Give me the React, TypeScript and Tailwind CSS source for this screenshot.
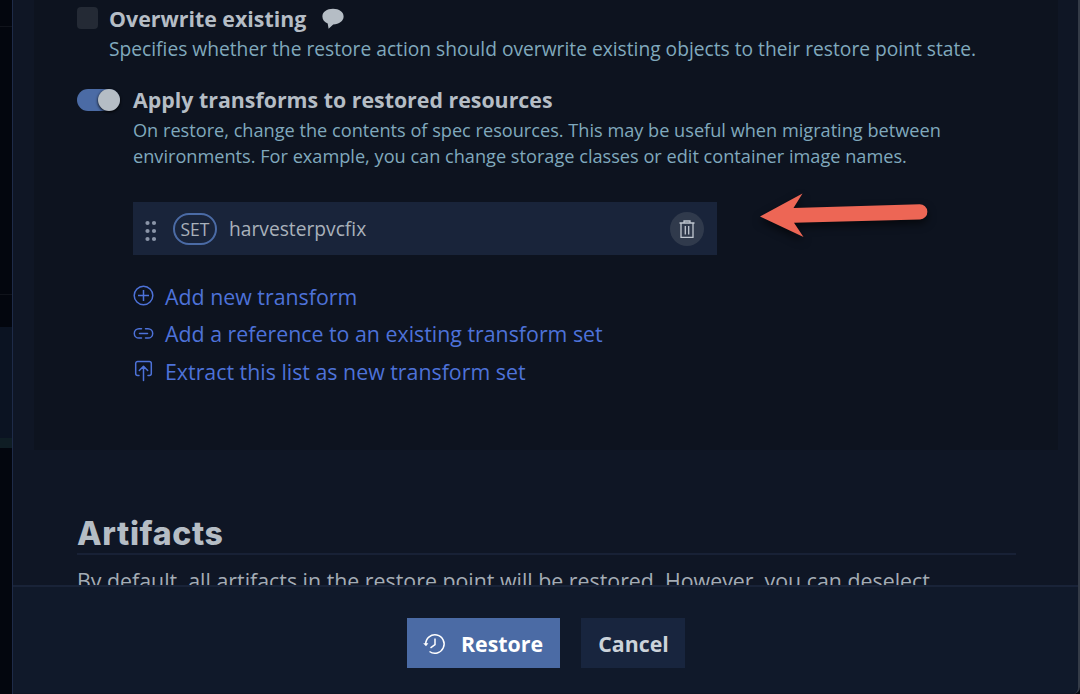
import type { ReactNode } from "react";

function ChatIcon() {
  return (
    <svg width="22" height="22" viewBox="0 0 22 22" className="ml-[16px] mt-[8px] shrink-0" fill="#b5bdc5">
      <path d="M11 .8C4.800 .8 .4 4 .4 8.500c0 3.200 2 5.700 5.300 7L6.600 20.700l4.600-4.300c6-.1 10.400-3.400 10.400-7.900C21.600 4 17.200 .8 11 .8Z" />
    </svg>
  );
}

function GripIcon() {
  return (
    <svg width="14" height="22" viewBox="0 0 14 22" fill="#8b95a8" className="mt-[4px]">
      {[3, 11, 19].map((y) => (
        <g key={y}>
          <circle cx="3.500" cy={y} r="2.100" />
          <circle cx="10" cy={y} r="2.100" />
        </g>
      ))}
    </svg>
  );
}

function TrashIcon() {
  return (
    <svg width="18" height="20" viewBox="0 0 18 20" fill="none" stroke="#c0c7d0" strokeWidth="1.300">
      <path d="M1.500 4h15M6 4V2h6v2M3 4v14.300h12V4M7.300 7v8.500M10.700 7v8.500" />
    </svg>
  );
}

function PlusIcon() {
  return (
    <svg width="22" height="22" viewBox="0 0 22 22" fill="none" stroke="currentColor" strokeWidth="1.500">
      <circle cx="10.500" cy="10.500" r="9.300" />
      <path d="M10.500 5v11M5 10.500h11" />
    </svg>
  );
}

function LinkIcon() {
  return (
    <svg width="22" height="22" viewBox="0 0 22 22" fill="none" stroke="currentColor" strokeWidth="1.500" strokeLinecap="round">
      <path d="M8.500 5.700H6a4.700 4.700 0 0 0 0 9.400h2.500M12.500 5.700H15a4.700 4.700 0 0 1 0 9.400h-2.500M6.500 10.400h8" />
    </svg>
  );
}

function ExtractIcon() {
  return (
    <svg width="22" height="22" viewBox="0 0 22 22" fill="none" stroke="currentColor" strokeWidth="1.500" strokeLinecap="round" strokeLinejoin="round">
      <path d="M6 15.500H4.700a2 2 0 0 1-2-2V3.500a2 2 0 0 1 2-2h11.600a2 2 0 0 1 2 2v10a2 2 0 0 1-2 2H15M10.500 20.500V6.500M6.300 10.500 10.500 6.300 14.700 10.500" />
    </svg>
  );
}

function HistoryIcon() {
  return (
    <svg width="24" height="24" viewBox="0 0 24 24" fill="none" stroke="#ffffff" strokeWidth="1.500" className="mt-px">
      <path d="M3.700 12A9.200 9.200 0 1 1 7.500 19.500" />
      <path d="M13 6.500v6l-4.500 3.300" />
      <path d="M1.200 11.300h5.200L4 14.200Z" fill="#ffffff" stroke="none" />
    </svg>
  );
}

function TransformLink({ icon, children }: { icon: ReactNode; children: ReactNode }) {
  return (
    <a className="flex h-[37.500px] items-center gap-[10px] whitespace-nowrap text-[21.350px] text-[#4d72d9]">
      {icon}
      <span className="pt-px">{children}</span>
    </a>
  );
}

function Arrow() {
  return (
    <svg width="190" height="60" viewBox="750 185 190 60" className="absolute left-[750px] top-[185px] overflow-visible drop-shadow-[0_4px_4px_rgba(0,0,0,0.6)]" fill="#ed6655">
      <path d="M760 216.500 802.500 193.500 793.500 208 919.500 204.300a7.600 7.600 0 0 1 .5 15.200L794 222.800 803.500 237Z" />
    </svg>
  );
}

export default function App() {
  return (
    <div className="relative flex h-[694px] w-[1080px] overflow-hidden bg-[#03060e] font-['Open_Sans','Noto_Sans',sans-serif]">
      <aside className="flex w-[12px] shrink-0 flex-col">
        <div className="h-[27px] border-b border-[#10131b]" />
        <div className="h-[268px] border-b border-[#10131b]" />
        <div className="h-[32px]" />
        <div className="h-[111px] bg-[#0b1322]" />
        <div className="h-[10px] bg-[#0f1d24]" />
      </aside>

      <div className="flex min-w-0 flex-1 flex-col rounded-br-[7px] border-r-2 border-l border-r-[#343b47] border-l-[#1e2b48] bg-[#0f1625]">
        <main className="flex h-[585px] shrink-0 flex-col overflow-hidden pr-[20px] pl-[21px]">
          <section className="h-[450px] shrink-0 bg-[#0d131f] pl-[43px]">
            <div className="flex h-[33px]">
              <span className="mt-[7px] h-[22px] w-[21px] shrink-0 rounded-[4px] bg-[#242a35]" />
              <h3 className="ml-[11px] text-[21.350px] leading-[38px] font-bold whitespace-nowrap text-[#b5bdc5]">Overwrite existing</h3>
              <ChatIcon />
            </div>
            <p className="ml-[32px] text-[19.220px] leading-[32px] whitespace-nowrap text-[#80a9bd]">
              Specifies whether the restore action should overwrite existing objects to their restore point state.
            </p>

            <div className="mt-[19px] flex h-[33px]">
              <span className="mt-[5px] flex h-[22px] w-[43px] shrink-0 justify-end rounded-full bg-[#4b6ba5]">
                <span className="h-[22px] w-[22px] rounded-full bg-[#b5bdc5] shadow-[0_1px_3px_#000000]" />
              </span>
              <h3 className="ml-[13px] text-[21.350px] leading-[32px] font-bold whitespace-nowrap text-[#b5bdc5]">Apply transforms to restored resources</h3>
            </div>
            <p className="ml-[56px] h-[53px] text-[18.170px] leading-[26px] whitespace-nowrap text-[#80a9bd]">
              On restore, change the contents of spec resources. This may be useful when migrating between
              <br />
              environments. For example, you can change storage classes or edit container image names.
            </p>

            <div className="mt-[32px] ml-[56px] flex h-[53px] w-[584px] items-center bg-[#19243a] pr-[13px] pl-[11px]">
              <GripIcon />
              <span className="ml-[15px] flex h-[32px] w-[44px] items-center justify-center rounded-full border-2 border-[#4b6ba5] pt-px text-[17.500px] text-[#a9b1ba]">SET</span>
              <span className="ml-[12px] pt-[2px] text-[19.220px] text-[#a9b1ba]">harvesterpvcfix</span>
              <span className="ml-auto flex h-[34px] w-[34px] items-center justify-center rounded-full bg-[#303a4c]">
                <TrashIcon />
              </span>
            </div>

            <nav className="mt-[22.500px] ml-[56px] flex flex-col">
              <TransformLink icon={<PlusIcon />}>Add new transform</TransformLink>
              <TransformLink icon={<LinkIcon />}>Add a reference to an existing transform set</TransformLink>
              <TransformLink icon={<ExtractIcon />}>Extract this list as new transform set</TransformLink>
            </nav>
          </section>

          <section className="mt-[64px] mr-[42px] ml-[43px] shrink-0">
            <h2 className="h-[41px] border-b-2 border-[#182136] font-[Inter,sans-serif] text-[32px] leading-[40px] font-extrabold tracking-[0.650px] text-[#b5bdc5]">Artifacts</h2>
            <p className="mt-[10px] text-[21.350px] leading-[32px] whitespace-nowrap text-[#a4acb5]">
              By default, all artifacts in the restore point will be restored. However, you can deselect
            </p>
          </section>
        </main>

        <footer className="flex h-[108px] shrink-0 justify-center gap-[21px] rounded-br-[6px] border-t-2 border-[#192338] bg-[#10192a] pt-[31px]">
          <button className="flex h-[50px] w-[153px] items-center bg-[#4b6ba5] pl-[15px] text-[21.330px] font-bold text-white">
            <HistoryIcon />
            <span className="ml-[15.500px] pt-px">Restore</span>
          </button>
          <button className="h-[50px] w-[104px] bg-[#18253e] pt-px pl-[2px] text-[21.330px] font-bold text-[#ccd3da]">Cancel</button>
        </footer>
      </div>
      <Arrow />
    </div>
  );
}
